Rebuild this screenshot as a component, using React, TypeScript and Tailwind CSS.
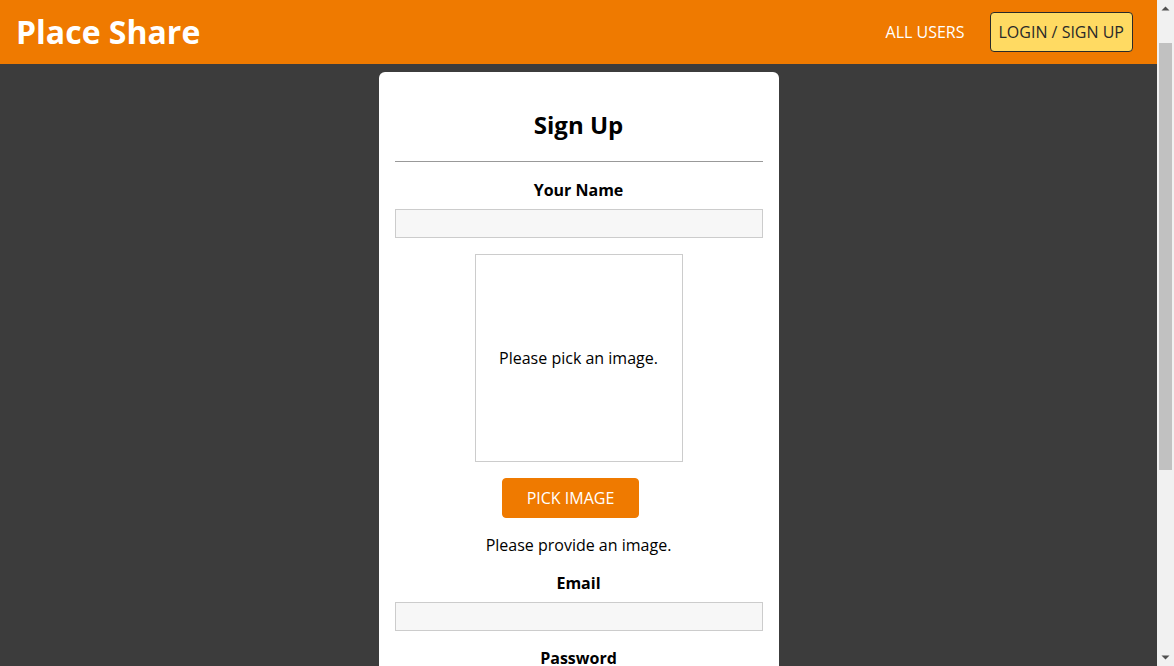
const FONT = { fontFamily: '"Open Sans", "Noto Sans", Arial, sans-serif' };

function Field({ label, type = 'text' }: { label: string; type?: string }) {
  return (
    <div className="my-4">
      <label className="block font-bold text-[16px] leading-[22px] text-black mb-2 text-center">{label}</label>
      <input
        type={type}
        className="block w-full h-[29px] bg-[#f7f7f7] border border-[#cccccc] px-1 text-[16px] focus:outline-none"
      />
    </div>
  );
}

function ImagePicker() {
  return (
    <div className="my-4 flex flex-col items-center">
      <div className="w-[208px] h-[208px] border border-[#cccccc] flex items-center justify-center">
        <p className="text-[16px] leading-[22px] text-black">Please pick an image.</p>
      </div>
      <button className="mt-4 mr-4 px-6 py-2 bg-[#ef7a00] border border-[#ef7a00] rounded text-white text-[16px] leading-[22px]">
        PICK IMAGE
      </button>
      <p className="mt-4 text-[16px] leading-[22px] text-black">Please provide an image.</p>
    </div>
  );
}

// window scrollbar as it appears in the screenshot
function Scrollbar() {
  return (
    <div className="w-[17px] shrink-0 h-full bg-[#f1f1f1] flex flex-col items-center">
      <svg width="17" height="17" viewBox="0 0 17 17" className="shrink-0">
        <path d="M4.5 10.5 L8.5 6.5 L12.5 10.5 Z" fill="#505050" />
      </svg>
      <div className="mt-[26px] w-[13px] h-[427px] bg-[#c1c1c1]" />
      <div className="flex-1" />
      <svg width="17" height="17" viewBox="0 0 17 17" className="shrink-0">
        <path d="M4.5 6.5 L12.5 6.5 L8.5 10.5 Z" fill="#505050" />
      </svg>
    </div>
  );
}

export default function App() {
  return (
    <div className="h-screen flex overflow-hidden" style={FONT}>
      <div className="flex-1 min-w-0 bg-[#3c3c3c] overflow-hidden">
        <header className="h-16 bg-[#ef7a00] flex items-center justify-between pl-4 pr-6">
          <h1 className="text-white font-bold text-[32px] leading-none">Place Share</h1>
          <nav className="flex items-center gap-4">
            <a className="px-2 py-2 border border-transparent text-white text-[16px] leading-[22px]">ALL USERS</a>
            <a className="px-2 py-2 border border-[#292929] rounded bg-[#ffda62] text-[#292929] text-[16px] leading-[22px]">
              LOGIN / SIGN UP
            </a>
          </nav>
        </header>

        <main className="pt-2 pb-10">
          <div className="w-[400px] mx-auto bg-white rounded-md px-4 pt-9 pb-4 text-center">
            <h2 className="font-bold text-[24px] leading-[33px] text-black">Sign Up</h2>
            <hr className="mt-[20px] border-0 border-t border-[#999999]" />
            <form className="pt-px">
              <Field label="Your Name" />
              <ImagePicker />
              <Field label="Email" type="email" />
              <Field label="Password" type="password" />
              <div className="flex justify-center">
                <button className="px-6 py-2 bg-[#ef7a00] border border-[#ef7a00] rounded text-white text-[16px] leading-[22px] mr-4">
                  SIGNUP
                </button>
              </div>
            </form>
            <button className="mt-4 px-6 py-2 border border-[#ef7a00] rounded text-[#ef7a00] text-[16px] leading-[22px]">
              SWITCH TO LOGIN
            </button>
          </div>
        </main>
      </div>
      <Scrollbar />
    </div>
  );
}
